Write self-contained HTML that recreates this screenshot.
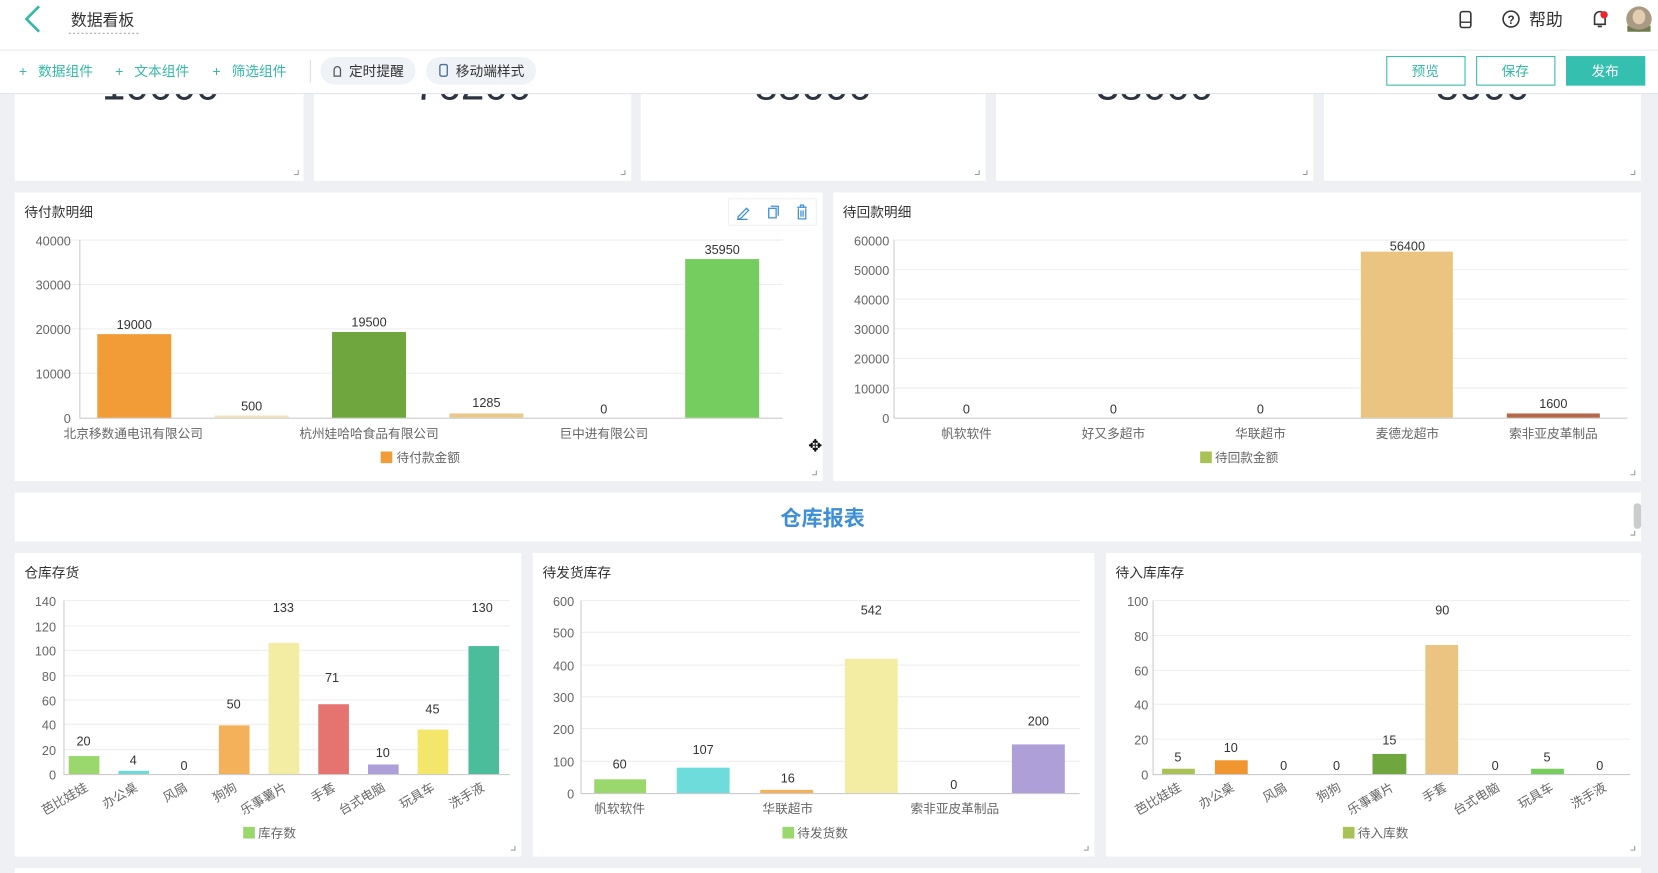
<!DOCTYPE html>
<html><head><meta charset="utf-8"><style>
html,body{margin:0;padding:0;width:1658px;height:873px;overflow:hidden;background:#eef0f4}
svg{display:block}
text{font-family:"Liberation Sans","Noto Sans CJK SC",sans-serif}
.ax{font-size:12px;fill:#666}
.vl{font-size:12px;fill:#333}
.tt{font-size:13px;fill:#333}
.gr{stroke:#eeeeee;stroke-width:1}
.axl{stroke:#ccc;stroke-width:1}
</style></head><body>
<svg width="1658" height="873" viewBox="0 0 1568 825.6" xmlns="http://www.w3.org/2000/svg">
<rect width="1568" height="826" fill="#eef0f4"/>
<!-- top cards -->
<g fill="#fff">
<rect x="14" y="60" width="273" height="111"/><rect x="297" y="60" width="300" height="111"/>
<rect x="606" y="60" width="326" height="111"/><rect x="942" y="60" width="300" height="111"/>
<rect x="1252" y="60" width="300" height="111"/>
</g>
<g font-size="40" fill="#2b3440" text-anchor="middle">
<text x="152" y="94">10000</text><text x="447" y="94">76200</text><text x="769" y="94">88000</text>
<text x="1092" y="94">38000</text><text x="1402" y="94">8000</text>
</g>
<!-- header -->
<rect x="0" y="0" width="1568" height="47" fill="#fff"/>
<line x1="0" y1="47.5" x2="1568" y2="47.5" stroke="#e8eaee"/>
<path d="M37 6 L25 18 L37 30" fill="none" stroke="#35b8a6" stroke-width="2.5"/>
<text x="67" y="24" font-size="15" fill="#333">数据看板</text>
<line x1="65" y1="31.5" x2="133" y2="31.5" stroke="#aaa" stroke-dasharray="2,2"/>
<rect x="1381" y="11" width="10" height="15" rx="2" fill="none" stroke="#333" stroke-width="1.5"/><line x1="1381" y1="21" x2="1391" y2="21" stroke="#333" stroke-width="1.3"/>
<circle cx="1429" cy="18" r="7.5" fill="none" stroke="#333" stroke-width="1.5"/><text x="1429" y="22.5" font-size="11" text-anchor="middle" fill="#333" font-weight="bold">?</text>
<text x="1446" y="24" font-size="16" fill="#333">帮助</text>
<path d="M1508 23 V16 a5 5 0 0 1 10 0 V23 Z M1511 25 h4" fill="none" stroke="#333" stroke-width="1.5"/>
<circle cx="1517" cy="14" r="3.5" fill="#e8262b"/>
<circle cx="1550" cy="18" r="12" fill="#a99a83"/><ellipse cx="1550" cy="16" rx="6" ry="7" fill="#e3cdb0"/><path d="M1539 24 q11 8 22 0 v6 h-22z" fill="#6f7a4f"/>
<!-- toolbar -->
<rect x="0" y="48" width="1568" height="40" fill="#fff"/>
<line x1="0" y1="88.5" x2="1568" y2="88.5" stroke="#e3e6ea"/>
<g font-size="13" fill="#35b8a6">
<text x="18" y="72">+</text><text x="36" y="72">数据组件</text>
<text x="109" y="72">+</text><text x="127" y="72">文本组件</text>
<text x="201" y="72">+</text><text x="219" y="72">筛选组件</text>
</g>
<line x1="293.5" y1="57" x2="293.5" y2="78" stroke="#ddd"/>
<rect x="303" y="54" width="90" height="26" rx="13" fill="#eff2f6"/>
<rect x="403" y="54" width="104" height="26" rx="13" fill="#eff2f6"/>
<path d="M316 72 v-6 a3 3 0 0 1 6 0 v6 z" fill="none" stroke="#555" stroke-width="1.2"/>
<rect x="416" y="61" width="7" height="11" rx="1.5" fill="none" stroke="#4a6fa0" stroke-width="1.3"/>
<text x="330" y="72" font-size="13" fill="#333">定时提醒</text>
<text x="431" y="72" font-size="13" fill="#333">移动端样式</text>
<rect x="1311.5" y="53.5" width="74" height="27" fill="#fff" stroke="#35b8a6"/>
<rect x="1396.5" y="53.5" width="74" height="27" fill="#fff" stroke="#35b8a6"/>
<rect x="1481" y="53" width="75" height="28" fill="#35bfae"/>
<text x="1348" y="72" font-size="13" fill="#35b8a6" text-anchor="middle">预览</text>
<text x="1433" y="72" font-size="13" fill="#35b8a6" text-anchor="middle">保存</text>
<text x="1518" y="72" font-size="13" fill="#fff" text-anchor="middle">发布</text>

<!-- row 2 -->
<rect x="14" y="182" width="764" height="273" fill="#fff"/>
<rect x="788" y="182" width="764" height="273" fill="#fff"/>
<text x="23" y="205" class="tt">待付款明细</text>
<rect x="689" y="188" width="83" height="25" fill="#fff" stroke="#f0f0f0"/>
<g stroke="#3d8fd6" stroke-width="1.2" fill="none">
<path d="M698 205 l8 -8 l2 2 l-8 8 h-2z M697 207.5 h10"/>
<rect x="727" y="197" width="7" height="9"/><path d="M729 195 h7 v9"/>
<path d="M754 196 h9 M757 196 v-2 h3 v2 M755 197 v10 h7 v-10 M757.5 199 v6 M759.5 199 v6"/>
</g>
<g class="gr"><line x1="57" y1="227" x2="740" y2="227"/><line x1="57" y1="269" x2="740" y2="269"/><line x1="57" y1="311" x2="740" y2="311"/><line x1="57" y1="353" x2="740" y2="353"/></g>
<g class="ax" text-anchor="end"><text x="67" y="232">40000</text><text x="67" y="274">30000</text><text x="67" y="316">20000</text><text x="67" y="358">10000</text><text x="67" y="400">0</text></g>
<line x1="75.5" y1="227" x2="75.5" y2="395" class="axl"/>
<line x1="75" y1="395.5" x2="740" y2="395.5" class="axl"/>
<rect x="92" y="316" width="70" height="79" fill="#f29c38"/>
<rect x="203" y="393" width="70" height="2" fill="#f3e3b8"/>
<rect x="314" y="314" width="70" height="81" fill="#6fa63d"/>
<rect x="425" y="391" width="70" height="4" fill="#ebc98a"/>
<rect x="648" y="245" width="70" height="150" fill="#75cc5f"/>
<g class="vl" text-anchor="middle"><text x="127" y="311">19000</text><text x="238" y="388">500</text><text x="349" y="309">19500</text><text x="460" y="385">1285</text><text x="571" y="391">0</text><text x="683" y="240">35950</text></g>
<g class="ax" text-anchor="middle"><text x="126" y="414">北京移数通电讯有限公司</text><text x="349" y="414">杭州娃哈哈食品有限公司</text><text x="571" y="414">巨中进有限公司</text></g>
<rect x="360" y="427" width="11" height="11" fill="#f29c38"/><text x="375" y="437" class="ax">待付款金额</text>
<text x="771" y="427" font-size="16" text-anchor="middle" fill="#111">✥</text>

<text x="797" y="205" class="tt">待回款明细</text>
<g class="gr"><line x1="845" y1="227" x2="1539" y2="227"/><line x1="845" y1="255" x2="1539" y2="255"/><line x1="845" y1="283" x2="1539" y2="283"/><line x1="845" y1="311" x2="1539" y2="311"/><line x1="845" y1="339" x2="1539" y2="339"/><line x1="845" y1="367" x2="1539" y2="367"/></g>
<g class="ax" text-anchor="end"><text x="841" y="232">60000</text><text x="841" y="260">50000</text><text x="841" y="288">40000</text><text x="841" y="316">30000</text><text x="841" y="344">20000</text><text x="841" y="372">10000</text><text x="841" y="400">0</text></g>
<line x1="845.5" y1="227" x2="845.5" y2="395" class="axl"/><line x1="845" y1="395.5" x2="1539" y2="395.5" class="axl"/>
<rect x="1287" y="238" width="87" height="157" fill="#ebc482"/>
<rect x="1425" y="391" width="88" height="4" fill="#b5694a"/>
<g class="vl" text-anchor="middle"><text x="914" y="391">0</text><text x="1053" y="391">0</text><text x="1192" y="391">0</text><text x="1331" y="237">56400</text><text x="1469" y="386">1600</text></g>
<g class="ax" text-anchor="middle"><text x="914" y="414">帆软软件</text><text x="1053" y="414">好又多超市</text><text x="1192" y="414">华联超市</text><text x="1331" y="414">麦德龙超市</text><text x="1469" y="414">索非亚皮革制品</text></g>
<rect x="1135" y="427" width="11" height="11" fill="#a9c256"/><text x="1149" y="437" class="ax">待回款金额</text>

<!-- section -->
<rect x="14" y="466" width="1538" height="46" fill="#fff"/>
<text x="778" y="497" font-size="20" font-weight="bold" fill="#3d8fd6" text-anchor="middle">仓库报表</text>
<rect x="1545" y="476" width="7" height="24" rx="3" fill="#ccc"/>

<!-- row 3 -->
<rect x="14" y="523" width="479" height="287" fill="#fff"/>
<rect x="504" y="523" width="531" height="287" fill="#fff"/>
<rect x="1046" y="523" width="506" height="287" fill="#fff"/>
<rect x="14" y="821" width="1538" height="10" fill="#fff"/>

<text x="23" y="546" class="tt">仓库存货</text>
<g class="gr"><line x1="60" y1="568" x2="482" y2="568"/><line x1="60" y1="592" x2="482" y2="592"/><line x1="60" y1="615" x2="482" y2="615"/><line x1="60" y1="639" x2="482" y2="639"/><line x1="60" y1="662" x2="482" y2="662"/><line x1="60" y1="685" x2="482" y2="685"/><line x1="60" y1="709" x2="482" y2="709"/></g>
<g class="ax" text-anchor="end"><text x="53" y="573">140</text><text x="53" y="597">120</text><text x="53" y="620">100</text><text x="53" y="644">80</text><text x="53" y="667">60</text><text x="53" y="690">40</text><text x="53" y="714">20</text><text x="53" y="737">0</text></g>
<line x1="60.5" y1="568" x2="60.5" y2="732" class="axl"/><line x1="60" y1="732.5" x2="482" y2="732.5" class="axl"/>
<rect x="65" y="715" width="29" height="17" fill="#9ad86e"/><rect x="112" y="729" width="29" height="3" fill="#6ed8d6"/>
<rect x="207" y="686" width="29" height="46" fill="#f5b05a"/><rect x="254" y="608" width="29" height="124" fill="#f2eda3"/>
<rect x="301" y="666" width="29" height="66" fill="#e57471"/><rect x="348" y="723" width="29" height="9" fill="#ae9fd8"/>
<rect x="395" y="690" width="29" height="42" fill="#f3e66a"/><rect x="443" y="611" width="29" height="121" fill="#4bbd9b"/>
<g class="vl" text-anchor="middle"><text x="79" y="705">20</text><text x="126" y="723">4</text><text x="174" y="728">0</text><text x="221" y="670">50</text><text x="268" y="579">133</text><text x="314" y="645">71</text><text x="362" y="716">10</text><text x="409" y="675">45</text><text x="456" y="579">130</text></g>
<g class="ax" text-anchor="end">
<text transform="translate(84,747) rotate(-30)">芭比娃娃</text><text transform="translate(131,747) rotate(-30)">办公桌</text><text transform="translate(178,747) rotate(-30)">风扇</text><text transform="translate(225,747) rotate(-30)">狗狗</text><text transform="translate(272,747) rotate(-30)">乐事薯片</text><text transform="translate(318,747) rotate(-30)">手套</text><text transform="translate(365,747) rotate(-30)">台式电脑</text><text transform="translate(412,747) rotate(-30)">玩具车</text><text transform="translate(459,747) rotate(-30)">洗手液</text></g>
<rect x="230" y="782" width="11" height="11" fill="#9ad86e"/><text x="244" y="792" class="ax">库存数</text>

<text x="513" y="546" class="tt">待发货库存</text>
<g class="gr"><line x1="549" y1="568" x2="1021" y2="568"/><line x1="549" y1="598" x2="1021" y2="598"/><line x1="549" y1="629" x2="1021" y2="629"/><line x1="549" y1="659" x2="1021" y2="659"/><line x1="549" y1="689" x2="1021" y2="689"/><line x1="549" y1="720" x2="1021" y2="720"/></g>
<g class="ax" text-anchor="end"><text x="543" y="573">600</text><text x="543" y="603">500</text><text x="543" y="634">400</text><text x="543" y="664">300</text><text x="543" y="694">200</text><text x="543" y="725">100</text><text x="543" y="755">0</text></g>
<line x1="549.5" y1="568" x2="549.5" y2="750" class="axl"/><line x1="549" y1="750.5" x2="1021" y2="750.5" class="axl"/>
<rect x="562" y="737" width="49" height="13" fill="#9ad86e"/><rect x="640" y="726" width="50" height="24" fill="#6edcdb"/>
<rect x="719" y="747" width="50" height="3" fill="#f5b05a"/><rect x="799" y="623" width="50" height="127" fill="#f2eda3"/>
<rect x="957" y="704" width="50" height="46" fill="#ae9fd8"/>
<g class="vl" text-anchor="middle"><text x="586" y="727">60</text><text x="665" y="713">107</text><text x="745" y="740">16</text><text x="824" y="581">542</text><text x="902" y="746">0</text><text x="982" y="686">200</text></g>
<g class="ax" text-anchor="middle"><text x="586" y="769">帆软软件</text><text x="745" y="769">华联超市</text><text x="903" y="769">索非亚皮革制品</text></g>
<rect x="740" y="782" width="11" height="11" fill="#9ad86e"/><text x="754" y="792" class="ax">待发货数</text>

<text x="1055" y="546" class="tt">待入库库存</text>
<g class="gr"><line x1="1090" y1="568" x2="1542" y2="568"/><line x1="1090" y1="601" x2="1542" y2="601"/><line x1="1090" y1="634" x2="1542" y2="634"/><line x1="1090" y1="666" x2="1542" y2="666"/><line x1="1090" y1="699" x2="1542" y2="699"/></g>
<g class="ax" text-anchor="end"><text x="1086" y="573">100</text><text x="1086" y="606">80</text><text x="1086" y="639">60</text><text x="1086" y="671">40</text><text x="1086" y="704">20</text><text x="1086" y="737">0</text></g>
<line x1="1090.5" y1="568" x2="1090.5" y2="732" class="axl"/><line x1="1090" y1="732.5" x2="1542" y2="732.5" class="axl"/>
<rect x="1099" y="727" width="31" height="5" fill="#a9c256"/><rect x="1149" y="719" width="31" height="13" fill="#f0952f"/>
<rect x="1298" y="713" width="32" height="19" fill="#6fa63d"/><rect x="1348" y="610" width="31" height="122" fill="#ebc482"/>
<rect x="1448" y="727" width="31" height="5" fill="#77cc5f"/>
<g class="vl" text-anchor="middle"><text x="1114" y="720">5</text><text x="1164" y="711">10</text><text x="1214" y="728">0</text><text x="1264" y="728">0</text><text x="1314" y="704">15</text><text x="1364" y="581">90</text><text x="1414" y="728">0</text><text x="1463" y="720">5</text><text x="1513" y="728">0</text></g>
<g class="ax" text-anchor="end">
<text transform="translate(1118,747) rotate(-30)">芭比娃娃</text><text transform="translate(1168,747) rotate(-30)">办公桌</text><text transform="translate(1218,747) rotate(-30)">风扇</text><text transform="translate(1269,747) rotate(-30)">狗狗</text><text transform="translate(1319,747) rotate(-30)">乐事薯片</text><text transform="translate(1369,747) rotate(-30)">手套</text><text transform="translate(1419,747) rotate(-30)">台式电脑</text><text transform="translate(1470,747) rotate(-30)">玩具车</text><text transform="translate(1520,747) rotate(-30)">洗手液</text></g>
<rect x="1270" y="782" width="11" height="11" fill="#a9c256"/><text x="1284" y="792" class="ax">待入库数</text>

<g stroke="#999" fill="none" stroke-width="1">
<path d="M278 165 h4 v-4"/><path d="M587 165 h4 v-4"/><path d="M922 165 h4 v-4"/><path d="M1232 165 h4 v-4"/><path d="M1542 165 h4 v-4"/>
<path d="M768 449 h4 v-4"/><path d="M1542 449 h4 v-4"/><path d="M1542 506 h4 v-4"/>
<path d="M483 804 h4 v-4"/><path d="M1025 804 h4 v-4"/><path d="M1542 804 h4 v-4"/>
</g>
</svg>
</body></html>
